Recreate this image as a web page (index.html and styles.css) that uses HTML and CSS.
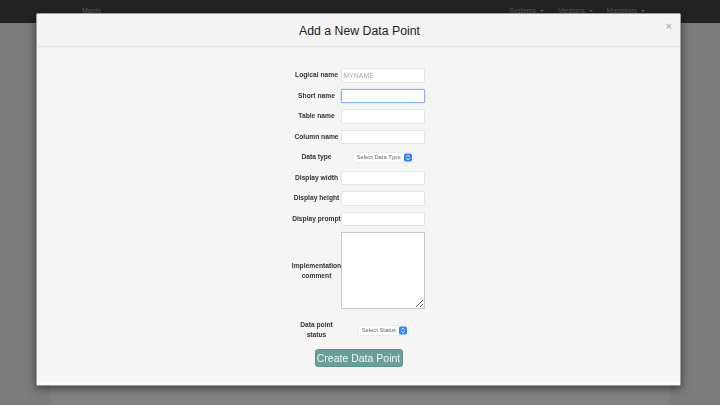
FILE: index.html
```html
<!DOCTYPE html>
<html>
<head>
<meta charset="utf-8">
<link rel="stylesheet" href="styles.css">
</head>
<body>
<nav class="navbar">
  <div class="brand">Maple</div>
  <ul class="nav-menu">
    <li>Systems <span class="caret"></span></li>
    <li>Versions <span class="caret"></span></li>
    <li>Mappings <span class="caret"></span></li>
  </ul>
</nav>
<main class="page">
  <div class="panel"></div>
</main>
<div class="backdrop">
  <div class="modal">
    <div class="modal-header">
      <h3 class="modal-title">Add a New Data Point</h3>
      <span class="close">×</span>
    </div>
    <div class="modal-body">
      <table class="form-table">
        <tr><th>Logical name</th><td><input class="field" placeholder="MYNAME"></td></tr>
        <tr><th>Short name</th><td><input class="field focused"></td></tr>
        <tr><th>Table name</th><td><input class="field"></td></tr>
        <tr><th>Column name</th><td><input class="field"></td></tr>
        <tr><th>Data type</th><td>
          <div class="select select-type"><span>Select Data Type</span>
            <svg class="sel-arrow" viewBox="0 0 8 8"><rect width="8" height="8" rx="1.6" fill="#3b82f0"/><path d="M2.3 3.3 4 1.7 5.7 3.3M2.3 4.7 4 6.3 5.7 4.7" fill="none" stroke="#fff" stroke-width="0.9"/></svg>
          </div></td></tr>
        <tr><th>Display width</th><td><input class="field"></td></tr>
        <tr><th>Display height</th><td><input class="field"></td></tr>
        <tr><th>Display prompt</th><td><input class="field"></td></tr>
        <tr class="tall"><th>Implementation<br>comment</th><td><textarea class="area"></textarea></td></tr>
        <tr class="status"><th>Data point<br>status</th><td>
          <div class="select select-status"><span>Select Status</span>
            <svg class="sel-arrow" viewBox="0 0 8 8"><rect width="8" height="8" rx="1.6" fill="#3b82f0"/><path d="M2.3 3.3 4 1.7 5.7 3.3M2.3 4.7 4 6.3 5.7 4.7" fill="none" stroke="#fff" stroke-width="0.9"/></svg>
          </div></td></tr>
      </table>
      <button class="btn">Create Data Point</button>
    </div>
    <div class="modal-footer"></div>
  </div>
</div>
</body>
</html>
```
FILE: styles.css
```css
* { box-sizing: border-box; }
html, body { margin: 0; padding: 0; }
body {
  width: 720px;
  height: 405px;
  overflow: hidden;
  background: #7b7b7b;
  font-family: "Liberation Sans", Arial, sans-serif;
}
.navbar {
  height: 23px;
  background: #222222;
  display: flex;
  align-items: center;
  justify-content: space-between;
  padding: 0 75px 0 82px;
  font-size: 7px;
  color: #5e5e5e;
}
.brand { padding-bottom: 2px; }
.nav-menu {
  list-style: none;
  margin: 0;
  padding: 0 0 2px 0;
  display: flex;
  gap: 14px;
}
.caret {
  display: inline-block;
  width: 0; height: 0;
  border-left: 2px solid transparent;
  border-right: 2px solid transparent;
  border-top: 2px solid #5e5e5e;
  vertical-align: middle;
  margin-left: 2px;
}
.page {
  display: flex;
  justify-content: center;
  height: 382px;
}
.panel {
  width: 620px;
  background: #818181;
}
.backdrop {
  position: fixed;
  inset: 0;
  display: flex;
  justify-content: flex-start;
  padding: 13px 0 0 36px;
}
.modal {
  width: 645px;
  height: 373px;
  background: #f5f5f5;
  border: 1px solid rgba(0,0,0,0.35);
  border-radius: 2px;
  box-shadow: 0 2px 8px rgba(0,0,0,0.55);
  display: flex;
  flex-direction: column;
  position: relative;
}
.modal-header {
  height: 33px;
  border-bottom: 1px solid #e4e4e4;
  background: #f4f4f4;
  display: flex;
  align-items: center;
  justify-content: center;
}
.modal-title {
  margin: 0;
  font-weight: normal;
  font-size: 12.3px;
  color: #222;
  padding: 1px 0 0 2px;
}
.close {
  position: absolute;
  right: 8px;
  top: 6px;
  font-size: 11px;
  color: #b8b8b8;
  font-weight: bold;
}
.modal-body {
  flex: 1;
  display: flex;
  flex-direction: column;
  align-items: center;
  padding-top: 18px;
}
.form-table {
  border-collapse: collapse;
  font-size: 6.7px;
  color: #333;
}
.form-table th {
  font-weight: bold;
  text-align: center;
  vertical-align: middle;
  padding: 0;
  line-height: 10px;
}
.form-table td {
  text-align: center;
  vertical-align: middle;
  padding: 3px 0;
  height: 20.5px;
}
.field {
  display: block;
  width: 84px;
  height: 14.5px;
  border: 1px solid #e6e6e6;
  background: #fff;
  border-radius: 1px;
  font-family: inherit;
  font-size: 7px;
  padding: 0 1px;
  outline: none;
}
.field::placeholder { color: #aaa; }
.field.focused {
  border-color: #8fb4ea;
  box-shadow: 0 0 1.5px #8fb4ea;
}
.select {
  display: inline-flex;
  align-items: center;
  height: 11px;
  background: #fff;
  border: 1px solid #ececec;
  border-radius: 2px;
  font-size: 5.8px;
  color: #666;
  padding-left: 3px;
  gap: 2px;
  vertical-align: middle;
}
.select-type { width: 61px; }
.select-status { width: 51px; margin-top: 2px; }
.select span { flex: 1; text-align: left; white-space: nowrap; }
.sel-arrow { width: 8px; height: 9px; margin-right: 0.5px; }
.tall td { padding: 3px 0; }
.area {
  display: block;
  width: 84px;
  height: 77px;
  border: 1px solid #c8c8c8;
  background: #fff;
  resize: vertical;
}
.status th { padding-top: 8px; }
.status td { padding-top: 9px; }
.btn {
  margin-top: 9px;
  width: 88px;
  height: 18px;
  background: #6a9e9a;
  border: 1px solid #5e908c;
  border-radius: 3px;
  color: #f4f4f4;
  font-family: inherit;
  font-size: 10.5px;
  white-space: nowrap;
  padding: 0;
}
.modal-footer {
  height: 4px;
  background: #fbfbfb;
}
```
